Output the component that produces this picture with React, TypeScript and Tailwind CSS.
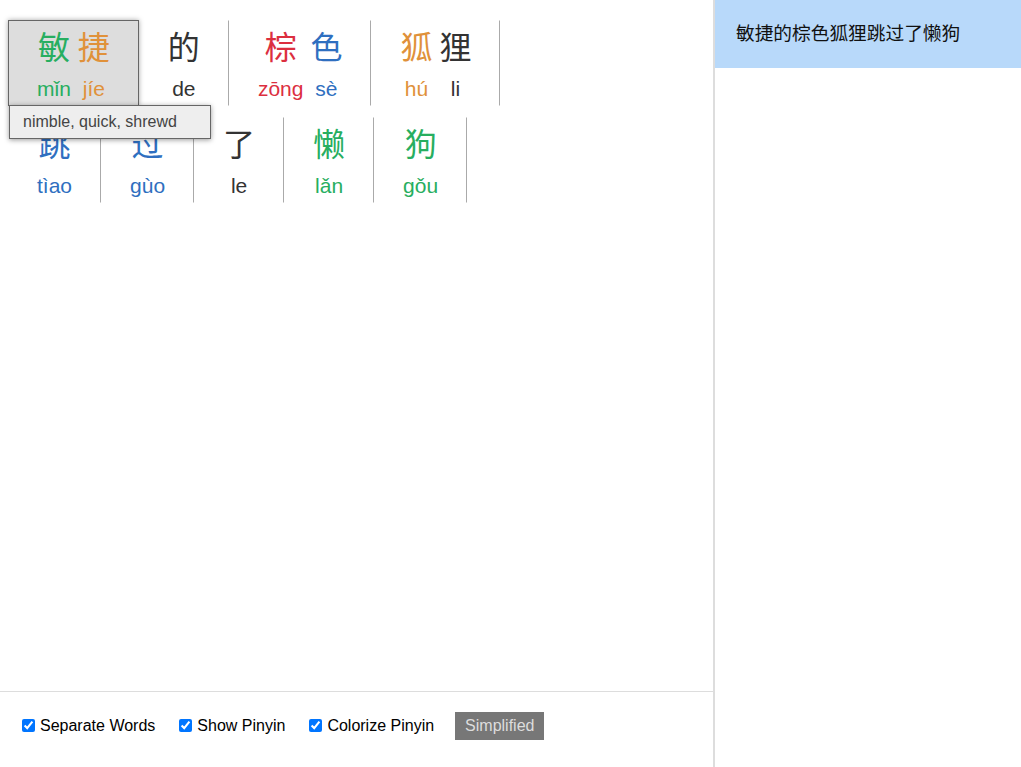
import React from "react"

type Tone = "red" | "orange" | "green" | "blue" | "dark"

const toneClass: Record<Tone, string> = {
    red: "text-[#dc2f3f]",
    orange: "text-[#e0913a]",
    green: "text-[#27ae60]",
    blue: "text-[#2f6fc0]",
    dark: "text-[#333333]",
}

type Syllable = { hanzi: string; pinyin: string; tone: Tone }
type Word = { syllables: Syllable[]; active?: boolean; meaning?: string }

const lines: Word[][] = [
    [
        {
            syllables: [
                { hanzi: "敏", pinyin: "mǐn", tone: "green" },
                { hanzi: "捷", pinyin: "jíe", tone: "orange" },
            ],
            active: true,
            meaning: "nimble, quick, shrewd",
        },
        { syllables: [{ hanzi: "的", pinyin: "de", tone: "dark" }] },
        {
            syllables: [
                { hanzi: "棕", pinyin: "zōng", tone: "red" },
                { hanzi: "色", pinyin: "sè", tone: "blue" },
            ],
        },
        {
            syllables: [
                { hanzi: "狐", pinyin: "hú", tone: "orange" },
                { hanzi: "狸", pinyin: "li", tone: "dark" },
            ],
        },
    ],
    [
        { syllables: [{ hanzi: "跳", pinyin: "tìao", tone: "blue" }] },
        { syllables: [{ hanzi: "过", pinyin: "gùo", tone: "blue" }] },
        { syllables: [{ hanzi: "了", pinyin: "le", tone: "dark" }] },
        { syllables: [{ hanzi: "懒", pinyin: "lǎn", tone: "green" }] },
        { syllables: [{ hanzi: "狗", pinyin: "gǒu", tone: "green" }] },
    ],
]

function WordCell({ word }: { word: Word }) {
    return (
        <div
            className={
                word.active
                    ? "relative z-10 flex h-[86px] gap-[7px] border border-[#666666] bg-[#dddddd] px-7 pt-[4px] shadow-[0_0_5px_rgba(0,0,0,0.35)]"
                    : "relative flex h-[86px] gap-[7px] border border-transparent border-r-[#aaaaaa] px-7 pt-[4px]"
            }
        >
            {word.syllables.map((s, i) => (
                <div key={i} className={`flex flex-col items-center ${toneClass[s.tone]}`}>
                    <span className="text-[32px] leading-[40px] [font-family:'Noto_Sans_CJK_SC',sans-serif]">{s.hanzi}</span>
                    <span className="mt-[10px] text-[21px] leading-[28px] [font-family:'Liberation_Sans',Arial,sans-serif]">{s.pinyin}</span>
                </div>
            ))}

            {/* Definition popup */}
            {word.meaning && (
                <div className="absolute left-0 top-full z-20 flex h-[34px] w-[202px] items-center border border-[#666666] bg-[#eeeeee] pl-[13px] text-[16px] text-[#444444] shadow-[0_1px_5px_rgba(0,0,0,0.4)]">
                    {word.meaning}
                </div>
            )}
        </div>
    )
}

function Toggle({ label, className }: { label: string; className: string }) {
    return (
        <label className={`flex items-center ${className}`}>
            <input type="checkbox" defaultChecked className="h-[13px] w-[13px] accent-[#0075ff]" />
            <span className="ml-[5px]">{label}</span>
        </label>
    )
}

export default function App() {
    return (
        <div className="flex h-[767px] w-full overflow-hidden bg-white [font-family:'Liberation_Sans',Arial,sans-serif]">
            {/* Reader */}
            <div className="flex flex-1 flex-col border-r-2 border-[#dddddd]">
                <div className="flex flex-1 flex-col gap-[11px] px-2 pt-[20px]">
                    {lines.map((line, i) => (
                        <div key={i} className="flex">
                            {line.map((w, j) => (
                                <WordCell key={j} word={w} />
                            ))}
                        </div>
                    ))}
                </div>

                {/* Options */}
                <div className="flex h-[76px] items-center border-t border-[#dddddd] pb-[8px] pl-[22px] text-[16px] text-black">
                    <Toggle label="Separate Words" className="mr-[24px]" />
                    <Toggle label="Show Pinyin" className="mr-[24px]" />
                    <Toggle label="Colorize Pinyin" className="mr-[21px]" />
                    <button className="h-[28px] bg-[#777777] px-[10px] text-[16px] text-[#dddddd]">Simplified</button>
                </div>
            </div>

            {/* Sentence list */}
            <div className="w-[306px]">
                <div className="flex h-[68px] items-center bg-[#b8d9fa] pb-[4px] pl-[21px] text-[18.7px] text-[#111111] [font-family:'Noto_Sans_CJK_SC',sans-serif]">
                    敏捷的棕色狐狸跳过了懒狗
                </div>
            </div>
        </div>
    )
}
